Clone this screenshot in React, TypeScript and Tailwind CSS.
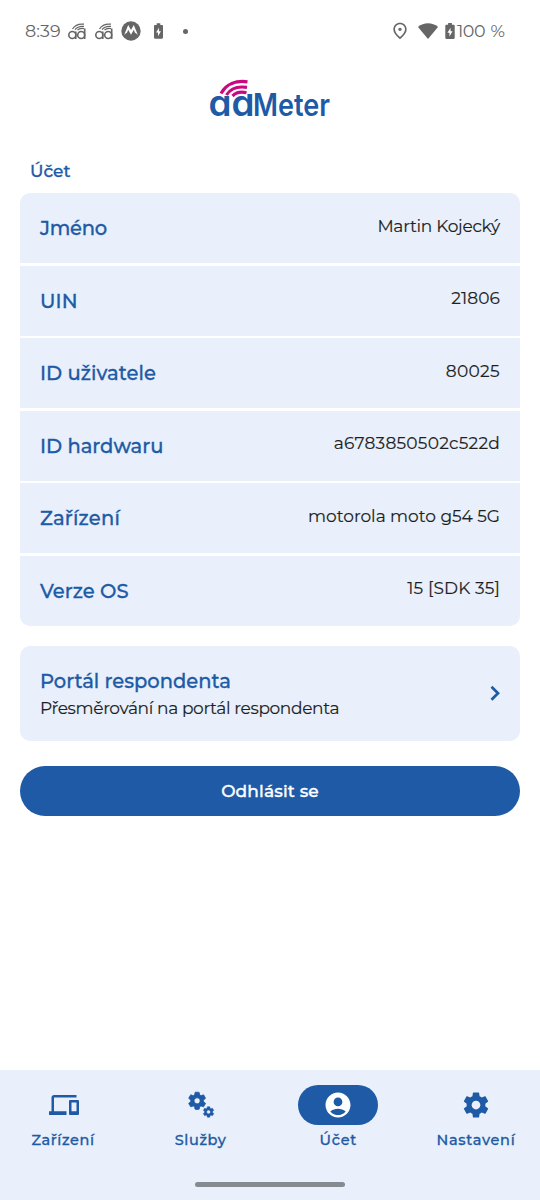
import React from 'react';
import { MdDevices, MdOutlinePlace } from 'react-icons/md';

interface Row {
  label: string;
  value: string;
  labelClass: string;
  valueClass: string;
}

const ROWS: Row[] = [
  { label: 'Jméno', value: 'Martin Kojecký', labelClass: 'tracking-[-0.3px]', valueClass: 'tracking-[-0.27px]' },
  { label: 'UIN', value: '21806', labelClass: 'tracking-[0.1px]', valueClass: 'tracking-[0.1px]' },
  { label: 'ID uživatele', value: '80025', labelClass: 'tracking-[0.06px]', valueClass: 'tracking-[0.3px]' },
  { label: 'ID hardwaru', value: 'a6783850502c522d', labelClass: 'tracking-[0px]', valueClass: 'tracking-[0.25px]' },
  { label: 'Zařízení', value: 'motorola moto g54 5G', labelClass: 'tracking-[0.2px]', valueClass: 'tracking-[-0.02px]' },
  { label: 'Verze OS', value: '15 [SDK 35]', labelClass: 'tracking-[0.02px]', valueClass: 'tracking-[0.15px]' },
];

const GEAR =
  'M19.43 12.98c.04-.32.07-.64.07-.98s-.03-.66-.07-.98l2.11-1.65c.19-.15.24-.42.12-.64l-2-3.46c-.12-.22-.39-.3-.61-.22l-2.49 1c-.52-.4-1.08-.73-1.69-.98l-.38-2.65C14.46 2.18 14.25 2 14 2h-4c-.25 0-.46.18-.49.42l-.38 2.65c-.61.25-1.17.59-1.69.98l-2.49-1c-.23-.09-.49 0-.61.22l-2 3.46c-.13.22-.07.49.12.64l2.11 1.65c-.04.32-.07.65-.07.98s.03.66.07.98l-2.11 1.65c-.19.15-.24.42-.12.64l2 3.46c.12.22.39.3.61.22l2.49-1c.52.4 1.08.73 1.69.98l.38 2.65c.03.24.24.42.49.42h4c.25 0 .46-.18.49-.42l.38-2.65c.61-.25 1.17-.59 1.69-.98l2.49 1c.23.09.49 0 .61-.22l2-3.46c.12-.22.07-.49-.12-.64l-2.11-1.65zM12 15.5c-1.93 0-3.5-1.57-3.5-3.5s1.57-3.5 3.5-3.5 3.5 1.57 3.5 3.5-1.57 3.5-3.5 3.5z';

const SettingsIcon = () => (
  <svg viewBox="0 0 24 24" className="size-[30px]" fill="currentColor">
    <path d={GEAR} />
  </svg>
);

const ServicesIcon = () => (
  <svg viewBox="0 0 30 30" className="size-[30px]" fill="currentColor" stroke="currentColor">
    <path d={GEAR} strokeWidth="0.9" transform="translate(0.8 0.5) scale(0.86)" />
    <path d={GEAR} strokeWidth="0.9" transform="translate(16.2 15.6) scale(0.53)" />
  </svg>
);

const AccountIcon = () => (
  <svg viewBox="0 0 24 24" className="size-[30px]" fill="currentColor">
    <path d="M12 2C6.48 2 2 6.48 2 12s4.48 10 10 10 10-4.48 10-10S17.52 2 12 2zm0 4c1.93 0 3.5 1.57 3.5 3.5S13.93 13 12 13s-3.5-1.57-3.5-3.5S10.07 6 12 6zm0 14c-2.03 0-4.43-.82-6.14-2.88C7.55 15.8 9.68 15 12 15s4.45.8 6.14 2.12C16.43 19.18 14.03 20 12 20z" />
  </svg>
);

const NAV = [
  { label: 'Zařízení', icon: <MdDevices size={30} className="ml-px" />, textClass: 'tracking-[0.6px]' },
  { label: 'Služby', icon: <ServicesIcon />, textClass: 'tracking-[0.6px]' },
  { label: 'Účet', icon: <AccountIcon />, textClass: 'tracking-[0.8px]', active: true },
  { label: 'Nastavení', icon: <SettingsIcon />, textClass: 'tracking-[0.7px]' },
];

const Battery = ({ className }: { className: string }) => (
  <svg viewBox="0 0 10 17" className={className} fill="currentColor">
    <path fillRule="evenodd" d="M3 0h4v1.8h1.8c.7 0 1.2.5 1.2 1.2v12.8c0 .7-.5 1.2-1.2 1.2H1.2C.5 17 0 16.5 0 15.8V3c0-.7.5-1.2 1.2-1.2H3zM5.6 5L2.300 10.300h2.100v4l3.300-5.500H5.600z" />
  </svg>
);

const AdBadge = () => (
  <svg viewBox="0 0 18 17" className="h-[17px] w-[18px]" fill="none" stroke="currentColor">
    <g strokeWidth="1.6">
      <circle cx="4.3" cy="12" r="3.5" />
      <path d="M7.800 8.500v7.500" />
      <circle cx="13.200" cy="12" r="3.5" />
      <path d="M16.700 5.500V16" />
    </g>
    <g strokeWidth="1.2">
      <path d="M4.500 6C7 2 11 .600 16 1.200" />
      <path d="M7 6.600C9 4 12 3 16 3.400" />
      <path d="M9.500 7.200C11 5.500 13.500 5.200 16 5.600" />
    </g>
  </svg>
);

const StatusBar = () => (
  <div className="flex h-[62px] items-center pl-[25px] pr-[35px] text-[#666666]">
    <span className="w-[43px] text-[17.5px] tracking-[0.1px]">8:39</span>
    <AdBadge />
    <div className="ml-[9px]"><AdBadge /></div>
    <svg viewBox="0 0 20 20" className="ml-2 size-5">
      <circle cx="10" cy="10" r="9.7" fill="currentColor" />
      <path d="M3 14.300L7.200 4 10 9l2.800-5L17 14.300c-.7-1.300-1.700-2.100-3-2.600l-1.200-3L10 13.800 7.200 8.700l-1.200 3c-1.300.5-2.300 1.300-3 2.600z" fill="#fff" />
    </svg>
    <Battery className="ml-[13px] h-4 w-[9px]" />
    <span className="ml-[20px] size-[5px] rounded-full bg-[#666666]" />
    <MdOutlinePlace size={20} className="ml-auto" />
    <svg viewBox="0 0 20 16" className="ml-[8px] h-4 w-5" fill="currentColor">
      <path d="M0 4C5.500-1 14.500-1 20 4L10 16z" />
    </svg>
    <Battery className="ml-[7px] h-4 w-[10px]" />
    <span className="ml-[2px] w-[48px] whitespace-nowrap text-[17.5px] tracking-[-0.5px] [word-spacing:1.5px]">100 %</span>
  </div>
);

const Logo = () => (
  <svg viewBox="-6 0 132 56" className="h-[56px] w-[132px] overflow-visible" role="img" aria-label="adMeter">
    <clipPath id="mark">
      <rect x="-6" y="15" width="132" height="41" />
    </clipPath>
    <g fill="#1e5aa5" className="font-['Inter','Liberation_Sans',sans-serif] [font-feature-settings:'cv11']">
      <text x="-1.5" y="37.2" fontSize="36" fontWeight="600" textLength="46" lengthAdjust="spacingAndGlyphs" clipPath="url(#mark)">ad</text>
      <text x="43" y="37" fontSize="31" fontWeight="600" textLength="77" lengthAdjust="spacingAndGlyphs">Meter</text>
    </g>
    <g fill="none" stroke="#c9087f" strokeWidth="3.2">
      <path d="M11 14.500C16 5 26 1.200 37.500 2.800" />
      <path d="M16.500 16C20.500 9.500 28 7 37 8.400" />
      <path d="M22.500 17C26 13.500 31 12.500 36.500 13.800" />
    </g>
  </svg>
);

const App: React.FC = () => {
  return (
    <div className="flex h-[1200px] w-[540px] flex-col overflow-hidden bg-white font-['Montserrat','Inter','Noto_Sans',sans-serif] text-[#1d1f24]">
      <StatusBar />

      <header className="flex h-[73px] justify-center pt-[17px]">
        <Logo />
      </header>

      <main className="flex-1 px-5">
        <h1 className="h-[58.3px] pl-[10px] pt-[24px] text-[17px] font-medium leading-[24px] text-[#1e5aa5] [-webkit-text-stroke:0.3px]">Účet</h1>

        <div className="flex flex-col gap-[2.5px] overflow-hidden rounded-[10px]">
          {ROWS.map(row => (
            <div key={row.label} className="flex h-[70px] items-center justify-between bg-[#e9f0fb] px-5">
              <span className={`pt-px text-[19.5px] font-medium text-[#1e5aa5] [-webkit-text-stroke:0.3px] ${row.labelClass}`}>{row.label}</span>
              <span className={`pb-[4px] text-[17px] [-webkit-text-stroke:0.15px] ${row.valueClass}`}>{row.value}</span>
            </div>
          ))}
        </div>

        <div className="mt-5 flex h-[95px] items-center justify-between rounded-[10px] bg-[#e9f0fb] px-5">
          <div className="pt-px">
            <div className="text-[19.5px] font-medium leading-[28px] text-[#1e5aa5] [-webkit-text-stroke:0.3px]">Portál respondenta</div>
            <div className="text-[17px] leading-[26px] tracking-[-0.36px] [-webkit-text-stroke:0.15px]">Přesměrování na portál respondenta</div>
          </div>
          <svg viewBox="0 0 10 16" className="h-4 w-[10px]" fill="none" stroke="#1e5aa5" strokeWidth="2.7">
            <path d="M1.500 1.700L8 8.200l-6.500 6.500" />
          </svg>
        </div>

        <button className="mt-[25px] block h-[50px] w-full rounded-full bg-[#1e5aa5] pt-px text-[17px] font-medium tracking-[0.15px] text-white [-webkit-text-stroke:0.35px]">
          Odhlásit se
        </button>
      </main>

      <nav className="flex h-[130px] flex-col items-center bg-[#e9f0fb] pt-[15px]">
        <div className="flex w-full justify-between pl-[13px] pr-[14px]">
          {NAV.map(item => (
            <div key={item.label} className="flex w-[100px] flex-col items-center text-[#1e5aa5]">
              <div className={`flex h-10 w-20 items-center justify-center rounded-full ${item.active ? 'bg-[#1e5aa5] text-white' : ''}`}>
                {item.icon}
              </div>
              <span className={`mt-[5px] text-[14.5px] font-medium leading-[20px] [-webkit-text-stroke:0.3px] ${item.textClass}`}>{item.label}</span>
            </div>
          ))}
        </div>
        <div className="mt-[32px] h-[5px] w-[150px] rounded-full bg-[#868a91]" />
      </nav>
    </div>
  );
};

export default App;
